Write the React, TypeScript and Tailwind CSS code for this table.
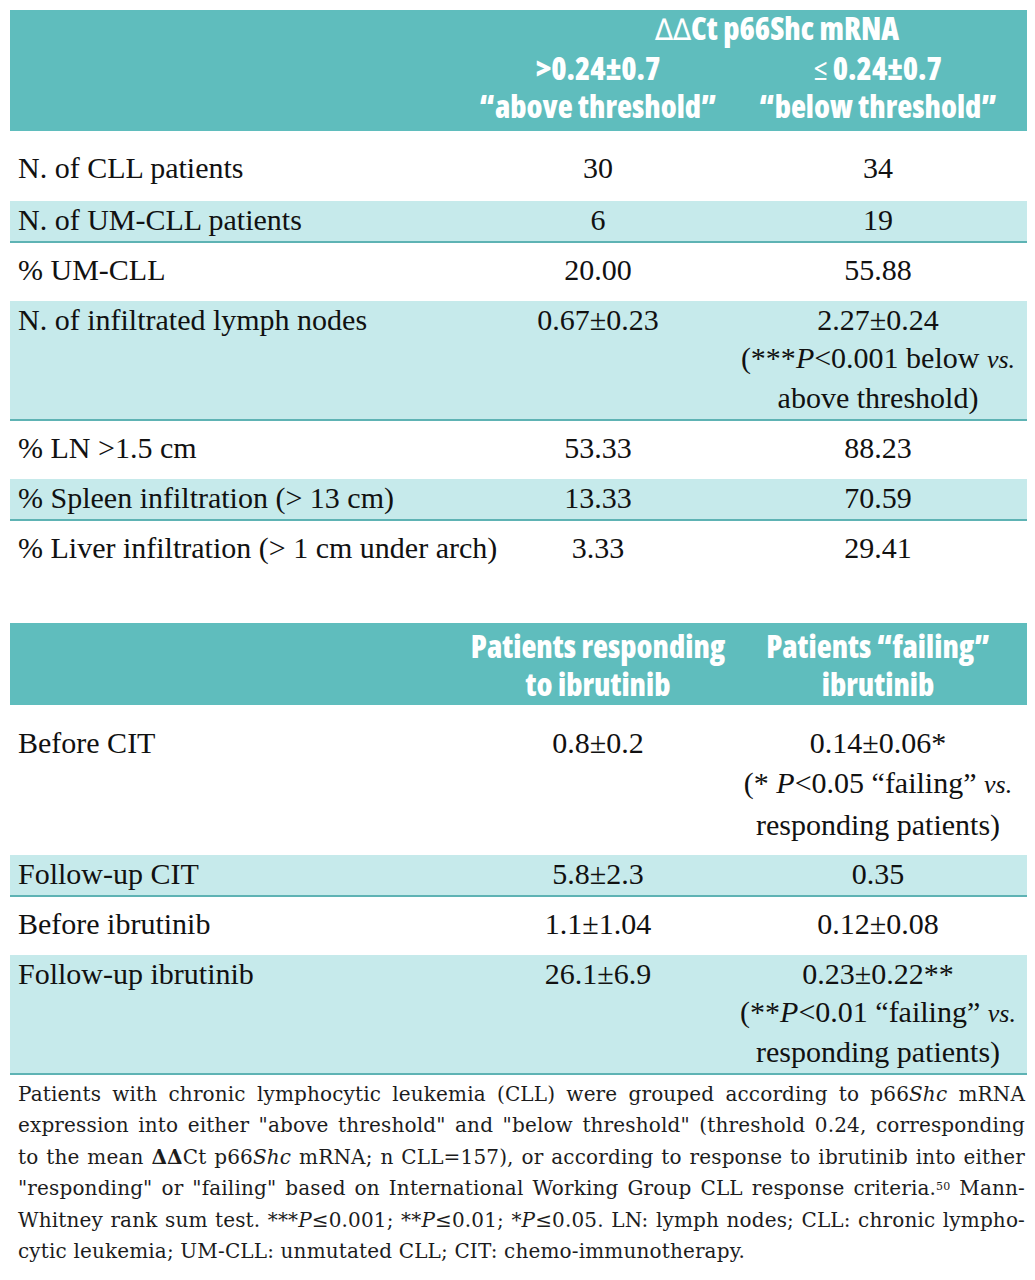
import React from "react";

const serif = "font-[Liberation_Serif,serif]";
const head = "font-[Open_Sans,sans-serif] font-extrabold font-stretch-condensed";
const cols = "grid grid-cols-[457px_262px_298px]";

type RowProps = {
  label: React.ReactNode;
  left: React.ReactNode;
  right: React.ReactNode;
  shaded?: boolean;
  pad?: string;
};

function Row({ label, left, right, shaded, pad }: RowProps) {
  const look = shaded
    ? "bg-[#c6eaeb] border-b-2 border-[#5eb3b4] leading-[38px] pb-[2px]"
    : pad ?? "pt-[7px] pb-[11px] leading-[40px]";
  return (
    <div className={`${cols} ${serif} text-[30px] text-[#111] ${look}`}>
      <div className="pl-2 whitespace-nowrap">{label}</div>
      <div className="text-center">{left}</div>
      <div className="text-center whitespace-nowrap">{right}</div>
    </div>
  );
}

const Vs = () => <i className="text-[26px]">vs.</i>;

function Delta() {
  return <span className="font-normal font-[DejaVu_Sans,sans-serif] text-[30px]">∆∆</span>;
}

export default function App() {
  return (
    <div className="w-[1035px] bg-white pt-[10px] pl-[10px] pb-8">
      <div className="w-[1017px]">
        {/* first table */}
        <div className={`${head} flex flex-col h-[121px] bg-[#5fbdbd] text-white text-[31px] leading-[38px]`}>
          <div className={`${cols} -mt-[1px] whitespace-nowrap`}>
            <div className="col-span-2 col-start-2 pl-[60px] text-center">
              <Delta />Ct p66Shc mRNA
            </div>
            <div className="col-start-2 text-center">
              &gt;0.24±0.7
              <br />
              “above threshold”
            </div>
            <div className="text-center">
              <span className="font-normal">≤</span> 0.24±0.7
              <br />
              “below threshold”
            </div>
          </div>
        </div>
        <Row label="N. of CLL patients" left="30" right="34" pad="pt-[17px] pb-[13px] leading-[40px]" />
        <Row label="N. of UM-CLL patients" left="6" right="19" shaded />
        <Row label="% UM-CLL" left="20.00" right="55.88" />
        <Row
          label="N. of infiltrated lymph nodes"
          left="0.67±0.23"
          right={
            <>
              2.27±0.24
              <br />
              (***<i>P</i>&lt;0.001 below <Vs />
              <br />
              above threshold)
            </>
          }
          shaded
        />
        <Row label="% LN >1.5 cm" left="53.33" right="88.23" />
        <Row label="% Spleen infiltration (> 13 cm)" left="13.33" right="70.59" shaded />
        <Row label="% Liver infiltration (> 1 cm under arch)" left="3.33" right="29.41" />

        {/* second table */}
        <div className={`${cols} ${head} mt-[44px] h-[82px] bg-[#5fbdbd] pt-[4px] text-white text-[31px] leading-[38px]`}>
          <div />
          <div className="text-center whitespace-nowrap">
            Patients responding
            <br />
            to ibrutinib
          </div>
          <div className="text-center whitespace-nowrap">
            Patients “failing”
            <br />
            ibrutinib
          </div>
        </div>
        <Row
          label="Before CIT"
          left="0.8±0.2"
          right={
            <>
              0.14±0.06*
              <br />
              (* <i>P</i>&lt;0.05 “failing” <Vs />
              <br />
              responding patients)
            </>
          }
          pad="pt-[18px] pb-[10px] leading-[40px]"
        />
        <Row label="Follow-up CIT" left="5.8±2.3" right="0.35" shaded />
        <Row label="Before ibrutinib" left="1.1±1.04" right="0.12±0.08" />
        <Row
          label="Follow-up ibrutinib"
          left="26.1±6.9"
          right={
            <>
              0.23±0.22**
              <br />
              (**<i>P</i>&lt;0.01 “failing” <Vs />
              <br />
              responding patients)
            </>
          }
          shaded
        />

        {/* footnote */}
        <div className="mt-[4px] ml-[8px] w-[1007px] font-[DejaVu_Serif,serif] text-[20px] leading-[31.4px] tracking-[0.15px] text-[#1c1c1c]">
          <div className="text-justify [text-align-last:justify]">
            Patients with chronic lymphocytic leukemia (CLL) were grouped according to p66<i>Shc</i> mRNA
          </div>
          <div className="text-justify [text-align-last:justify]">
            expression into either "above threshold" and "below threshold" (threshold 0.24, corresponding
          </div>
          <div className="text-justify [text-align-last:justify]">
            to the mean <b>ΔΔ</b>Ct p66<i>Shc</i> mRNA; n CLL=157), or according to response to ibrutinib into either
          </div>
          <div className="text-justify [text-align-last:justify]">
            "responding" or "failing" based on International Working Group CLL response criteria.
            <sup className="text-[11px]">50</sup> Mann-
          </div>
          <div className="text-justify [text-align-last:justify]">
            Whitney rank sum test. ***<i>P</i>≤0.001; **<i>P</i>≤0.01; *<i>P</i>≤0.05. LN: lymph nodes; CLL: chronic lympho-
          </div>
          <div>cytic leukemia; UM-CLL: unmutated CLL; CIT: chemo-immunotherapy.</div>
        </div>
      </div>
    </div>
  );
}
